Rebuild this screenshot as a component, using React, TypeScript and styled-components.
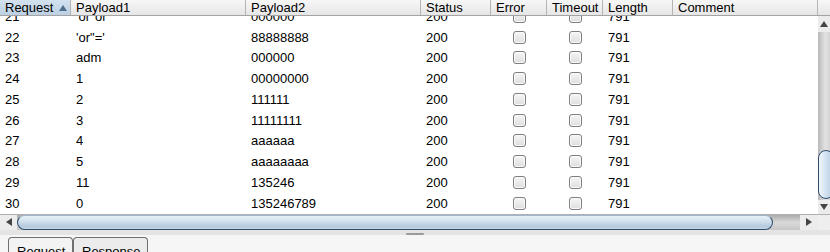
import React from "react";
import styled, { createGlobalStyle } from "styled-components";

const GlobalStyle = createGlobalStyle`
  html, body { margin: 0; padding: 0; background: #f4f4f4; }
  body { font-family: "Liberation Sans", Arial, sans-serif; }
`;

const COLS = [71, 175, 175, 70, 56, 56, 70, 145];
const HEADERS = ["Request", "Payload1", "Payload2", "Status", "Error", "Timeout", "Length", "Comment"];

const ROWS: [string, string, string][] = [
  ["21", "'or''or'", "000000"],
  ["22", "'or\"='", "88888888"],
  ["23", "adm", "000000"],
  ["24", "1", "00000000"],
  ["25", "2", "111111"],
  ["26", "3", "11111111"],
  ["27", "4", "aaaaaa"],
  ["28", "5", "aaaaaaaa"],
  ["29", "11", "135246"],
  ["30", "0", "135246789"],
];

const Frame = styled.div`
  width: 830px;
  height: 252px;
  overflow: hidden;
  display: flex;
  flex-direction: column;
`;

const HeaderRow = styled.div`
  display: flex;
  height: 16px;
  border-bottom: 1px solid #a3a3a3;
  background: linear-gradient(#f7f7f7, #e6e6e6);
`;

const HeaderCell = styled.div<{ $w: number; $active?: boolean }>`
  width: ${(p) => p.$w}px;
  flex: none;
  box-sizing: border-box;
  padding-left: 5px;
  border-right: 1px solid #b4b4b4;
  font-size: 13px;
  line-height: 15px;
  color: #000;
  display: flex;
  align-items: center;
  gap: 6px;
  background: ${(p) => (p.$active ? "linear-gradient(#d3e2ef, #bcd0e2)" : "transparent")};
`;

const HeaderFill = styled.div`
  flex: 1;
`;

const BodyRow = styled.div`
  display: flex;
  height: 198px;
  border-bottom: 1px solid #b0b0b0;
`;

const Viewport = styled.div`
  width: 818px;
  flex: none;
  overflow: hidden;
  background: #fff;
`;

const RowList = styled.div`
  margin-top: -10px;
`;

const Row = styled.div`
  display: flex;
  height: 20.75px;
  align-items: center;
`;

const Cell = styled.div<{ $w: number; $center?: boolean }>`
  width: ${(p) => p.$w}px;
  flex: none;
  box-sizing: border-box;
  padding-left: ${(p) => (p.$center ? 0 : 5)}px;
  font-size: 13px;
  color: #000;
  white-space: nowrap;
  display: flex;
  justify-content: ${(p) => (p.$center ? "center" : "flex-start")};
`;

const Check = styled.div`
  width: 13px;
  height: 13px;
  box-sizing: border-box;
  border: 1px solid #7e7e7e;
  border-radius: 3px;
  background: linear-gradient(#f6f6f6, #dedede);
  box-shadow: inset 0 0 0 1px #fbfbfb;
  margin-left: 1px;
`;

const VScroll = styled.div`
  width: 12px;
  flex: none;
  display: flex;
  flex-direction: column;
  background: linear-gradient(90deg, #b9b9b9, #e2e2e2 60%, #d4d4d4);
  overflow: hidden;
`;

const ArrowBtn = styled.div<{ $h?: number; $w?: number }>`
  height: ${(p) => p.$h ?? 15}px;
  width: ${(p) => (p.$w ? p.$w + "px" : "auto")};
  flex: none;
  display: flex;
  align-items: center;
  justify-content: center;
  background: #ececec;
`;

const VTrack = styled.div`
  flex: 1;
  display: flex;
  flex-direction: column;
  justify-content: flex-end;
  padding-bottom: 1px;
`;

const VThumb = styled.div`
  height: 49px;
  width: 16px;
  box-sizing: border-box;
  border: 1px solid #2f4d6b;
  border-radius: 9px;
  background: linear-gradient(90deg, #f2f7fb, #d2e2f0 50%, #b5cbe0);
`;

const HRow = styled.div`
  display: flex;
  height: 15px;
`;

const HScroll = styled.div`
  width: 818px;
  flex: none;
  display: flex;
  background: linear-gradient(#ababab, #d9d9d9 50%, #c7c7c7);
`;

const HThumb = styled.div`
  width: 756px;
  flex: none;
  box-sizing: border-box;
  border: 1px solid #2f4d6b;
  border-top-color: #9fb6cb;
  border-radius: 10px;
  background: linear-gradient(#e8f0f7, #cfdeec 45%, #b3c9de 80%, #c6d7e6);
`;

const HTrack = styled.div`
  flex: 1;
`;

const Corner = styled.div`
  flex: 1;
  background: #eeeeee;
`;

const Splitter = styled.div`
  height: 9px;
  background: #e4e4e4;
  display: flex;
  justify-content: center;
  padding-top: 3px;
  box-sizing: border-box;
`;

const Grip = styled.div`
  width: 18px;
  height: 2px;
  border-radius: 1px;
  background: #9a9a9a;
`;

const TabBar = styled.div`
  flex: 1;
  display: flex;
  padding: 2px 0 0 8px;
  background: #f6f6f6;
`;

const Tab = styled.div<{ $w: number; $selected?: boolean }>`
  width: ${(p) => p.$w}px;
  box-sizing: border-box;
  border: 1px solid #6f6f6f;
  border-bottom: none;
  border-radius: 4px 4px 0 0;
  background: ${(p) => (p.$selected ? "#f3f3f3" : "#ececec")};
  font-size: 13px;
  padding: 6px 0 0 8px;
  height: 22px;
  color: #000;
`;

const Tri = ({ dir, color = "#444" }: { dir: "up" | "down" | "left" | "right"; color?: string }) => {
  const pts =
    dir === "up" ? "0,6 4,0 8,6" : dir === "down" ? "0,0 8,0 4,6" : dir === "left" ? "6,0 6,8 0,4" : "0,0 0,8 6,4";
  const w = dir === "up" || dir === "down" ? 8 : 6;
  const h = dir === "up" || dir === "down" ? 6 : 8;
  return (
    <svg width={w} height={h} viewBox={`0 0 ${w} ${h}`}>
      <polygon points={pts} fill={color} />
    </svg>
  );
};

export default function App() {
  return (
    <Frame>
      <GlobalStyle />
      <HeaderRow>
        {HEADERS.map((h, i) => (
          <HeaderCell key={h} $w={COLS[i]} $active={i === 0}>
            {h}
            {i === 0 && <Tri dir="up" color="#4f6e8e" />}
          </HeaderCell>
        ))}
        <HeaderFill />
      </HeaderRow>
      <BodyRow>
        <Viewport>
          <RowList>
            {ROWS.map(([n, p1, p2]) => (
              <Row key={n}>
                <Cell $w={COLS[0]}>{n}</Cell>
                <Cell $w={COLS[1]}>{p1}</Cell>
                <Cell $w={COLS[2]}>{p2}</Cell>
                <Cell $w={COLS[3]}>200</Cell>
                <Cell $w={COLS[4]} $center>
                  <Check />
                </Cell>
                <Cell $w={COLS[5]} $center>
                  <Check />
                </Cell>
                <Cell $w={COLS[6]}>791</Cell>
                <Cell $w={COLS[7]} />
              </Row>
            ))}
          </RowList>
        </Viewport>
        <VScroll>
          <ArrowBtn $h={16}>
            <Tri dir="up" />
          </ArrowBtn>
          <VTrack>
            <VThumb />
          </VTrack>
          <ArrowBtn $h={14}>
            <Tri dir="down" />
          </ArrowBtn>
        </VScroll>
      </BodyRow>
      <HRow>
        <HScroll>
          <ArrowBtn $w={17}>
            <Tri dir="left" />
          </ArrowBtn>
          <HThumb />
          <HTrack />
          <ArrowBtn $w={18}>
            <Tri dir="right" />
          </ArrowBtn>
        </HScroll>
        <Corner />
      </HRow>
      <Splitter>
        <Grip />
      </Splitter>
      <TabBar>
        <Tab $w={65} $selected>
          Request
        </Tab>
        <Tab $w={75}>Response</Tab>
      </TabBar>
    </Frame>
  );
}
